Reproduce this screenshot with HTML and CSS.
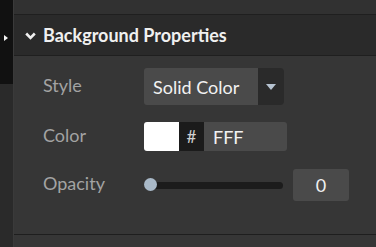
FILE: index.html
```html
<!DOCTYPE html>
<html>
<head>
<meta charset="utf-8">
<link rel="stylesheet" href="styles.css">
</head>
<body>
<div class="app">
  <aside class="rail">
    <div class="rail-top"><span class="rail-arrow"></span></div>
  </aside>
  <main class="panel">
    <div class="topbar"></div>
    <div class="section-head">
      <svg class="chev" width="11" height="8" viewBox="0 0 11 8"><path d="M1.2 1.5 L5.5 5.8 L9.8 1.5" fill="none" stroke="#f0f0f0" stroke-width="2.6"/></svg>
      <span class="section-title">Background Properties</span>
    </div>
    <div class="section-body">
      <div class="row row-style">
        <span class="label">Style</span>
        <div class="select">
          <span class="select-value">Solid Color</span>
          <span class="select-btn"><svg width="10" height="6" viewBox="0 0 10 6"><path d="M0 0 H10 L5 6 Z" fill="#b6c3d1"/></svg></span>
        </div>
      </div>
      <div class="row row-color">
        <span class="label">Color</span>
        <div class="color-field">
          <span class="swatch"></span>
          <span class="hash">#</span>
          <span class="hex">FFF</span>
        </div>
      </div>
      <div class="row row-opacity">
        <span class="label">Opacity</span>
        <div class="slider"><span class="track"></span><span class="thumb"></span></div>
        <span class="num">0</span>
      </div>
    </div>
  </main>
</div>
</body>
</html>
```
FILE: styles.css
```css
html, body { margin: 0; padding: 0; }
body {
  background: #363636;
  font-family: Lato, "Open Sans", sans-serif;
  width: 376px;
  height: 247px;
  overflow: hidden;
}
.app { display: flex; height: 247px; }
.rail {
  width: 13px;
  flex: none;
  background: #2a2a2a;
  border-right: 1px solid #3a3a3a;
}
.rail-top {
  height: 84px;
  background: #111111;
  padding-top: 35px;
  box-sizing: border-box;
}
.rail-arrow {
  display: block;
  margin-left: 4px;
  width: 0; height: 0;
  border-top: 3.5px solid transparent;
  border-bottom: 3.5px solid transparent;
  border-left: 4px solid #f4f4f4;
}
.panel { flex: 1; display: flex; flex-direction: column; }
.topbar {
  height: 14px;
  background: #313131;
  border-bottom: 1px solid #1f1f1f;
}
.section-head {
  height: 41px;
  background: #2a2a2a;
  border-bottom: 1px solid #1f1f1f;
  display: flex;
  align-items: center;
  padding-left: 11px;
  box-sizing: border-box;
}
.chev { margin-right: 7px; margin-top: 1px; }
.section-title {
  color: #f0f0f0;
  font-size: 18px;
  font-weight: 700;
}
.section-body {
  padding: 12px 0 0 29px;
  height: 179px;
  box-sizing: border-box;
  border-bottom: 1px solid #1e1e1e;
  display: flex;
  flex-direction: column;
  gap: 17px;
}
.row { display: flex; align-items: center; }
.label {
  width: 101px;
  color: #a3a3a3;
  font-size: 18px;
  padding-bottom: 4px;
}
.select { display: flex; height: 37px; }
.select-value {
  width: 114px;
  box-sizing: border-box;
  background: #4a4a4a;
  color: #f2f2f2;
  font-size: 18px;
  padding-left: 9px;
  display: flex;
  align-items: center;
  border-radius: 3px 0 0 3px;
}
.select-btn {
  width: 26px;
  background: #2a2a2a;
  border-radius: 0 4px 4px 0;
  display: flex;
  align-items: center;
  justify-content: center;
}
.color-field { display: flex; height: 29px; }
.swatch { width: 35px; background: #ffffff; border-radius: 3px 0 0 3px; }
.hash {
  width: 25px;
  background: #1b1b1b;
  color: #d0d0d0;
  font-size: 17px;
  display: flex;
  align-items: center;
  justify-content: center;
}
.hex {
  width: 83px;
  box-sizing: border-box;
  background: #4a4a4a;
  color: #f2f2f2;
  font-size: 18px;
  padding-left: 9px;
  display: flex;
  align-items: center;
  border-radius: 0 3px 3px 0;
}
.row-opacity { margin-top: 1px; }
.slider {
  position: relative;
  width: 139px;
  height: 14px;
}
.track {
  position: absolute;
  left: 6px; right: 0; top: 4px;
  height: 7px;
  background: #1c1c1c;
  border-radius: 4px;
}
.thumb {
  position: absolute;
  left: 0; top: 0;
  width: 13px; height: 13px;
  border-radius: 50%;
  background: #a9b9c8;
}
.num {
  margin-left: 10px;
  width: 56px;
  height: 32px;
  background: #4a4a4a;
  border-radius: 3px;
  color: #f0f0f0;
  font-size: 18px;
  display: flex;
  align-items: center;
  justify-content: center;
}
```
